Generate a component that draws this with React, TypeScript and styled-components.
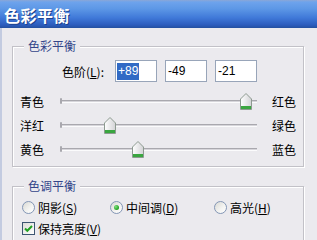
import React from 'react';
import styled, { createGlobalStyle } from 'styled-components';

const GlobalStyle = createGlobalStyle`
  html, body {
    margin: 0;
    padding: 0;
    background: #ebeaee;
  }
  body {
    font-family: "Noto Sans CJK SC", "Noto Sans", sans-serif;
    font-size: 12px;
    color: #000;
  }
`;

const Window = styled.div`
  width: 317px;
  height: 240px;
  overflow: hidden;
  background: #ebeaee;
  display: flex;
  flex-direction: column;
`;

const TitleBar = styled.div`
  height: 28px;
  flex-shrink: 0;
  box-sizing: border-box;
  padding: 2px 0 0 4px;
  display: flex;
  align-items: center;
  background: linear-gradient(
    to bottom,
    #8ba6d6 0px,
    #6ea3ec 2px,
    #5c97e6 9px,
    #3f78d8 18px,
    #2c5cbd 25px,
    #24509f 28px
  );
  color: #fff;
  font-size: 16px;
  font-weight: bold;
  letter-spacing: 0.5px;
  text-shadow: 1px 1px 0 #1d428f;
`;

const Body = styled.div`
  flex: 1;
  border-left: 2px solid #c3cbe0;
  padding: 0 13px 0 10px;
`;

const Group = styled.div<{ $top: number; $bottom: number }>`
  margin-top: ${p => p.$top}px;
  padding-bottom: ${p => p.$bottom}px;
  border: 1px solid #c2c1c7;
  box-shadow: inset 1px 1px 0 #fff, 1px 1px 0 #fff;
`;

const Legend = styled.div`
  width: fit-content;
  margin: -9px 0 0 11px;
  padding: 0 4px;
  line-height: 16px;
  background: #ebeaee;
  color: #33458a;
`;

const LevelRow = styled.div`
  display: flex;
  align-items: center;
  height: 22px;
  margin-top: 6px;
  padding-left: 49px;
`;

const LevelLabel = styled.div`
  width: 53px;
`;

const Inputs = styled.div`
  display: flex;
  gap: 8px;
`;

const ValueBox = styled.div`
  width: 42px;
  height: 22px;
  box-sizing: border-box;
  border: 1px solid #98a5b9;
  background: #fff;
  padding-left: 1px;
  display: flex;
  align-items: center;
  font-family: "Liberation Sans", Arial, sans-serif;
  font-size: 12px;
`;

const ValueText = styled.span<{ $selected?: boolean }>`
  padding: 0 1px;
  line-height: 17px;
  background: ${p => (p.$selected ? '#316ac5' : 'transparent')};
  color: ${p => (p.$selected ? '#fff' : '#000')};
`;

const Sliders = styled.div`
  margin-top: 7px;
`;

const SliderRow = styled.div`
  display: flex;
  align-items: center;
  height: 24px;
  padding-left: 7px;
`;

const SideLabel = styled.div`
  width: 40px;
`;

const RightLabel = styled.div`
  margin-left: 15px;
`;

const Track = styled.div`
  position: relative;
  width: 197px;
  height: 24px;
  display: flex;
  align-items: center;
`;

const TrackLine = styled.div`
  position: relative;
  width: 100%;
  height: 1px;
  border-top: 1px solid #a9a8ae;
  border-bottom: 1px solid #fbfbfc;
  background: #d6d5da;

  &::before {
    content: '';
    position: absolute;
    left: 0;
    top: -3px;
    width: 2px;
    height: 6px;
    border-radius: 1px;
    background: #a9a8ae;
  }
`;

const Thumb = styled.div`
  position: absolute;
  top: 4px;
  width: 12px;
  height: 17px;
  margin-left: -6px;
  display: flex;
`;

const OptionRow = styled.div`
  display: grid;
  grid-template-columns: 88px 104px auto;
  align-items: center;
  height: 16px;
  margin-top: 5px;
  padding-left: 9px;
`;

const Option = styled.div`
  display: flex;
  align-items: center;
  gap: 3px;
`;

const Radio = styled.span<{ $checked?: boolean }>`
  position: relative;
  width: 13px;
  height: 13px;
  box-sizing: border-box;
  border-radius: 50%;
  border: 1px solid #8396b5;
  background: linear-gradient(135deg, #d9d9d4 0%, #f4f4f2 60%, #fff 100%);

  &::after {
    content: '';
    display: ${p => (p.$checked ? 'block' : 'none')};
    position: absolute;
    left: 3px;
    top: 3px;
    width: 5px;
    height: 5px;
    border-radius: 50%;
    background: radial-gradient(circle at 35% 35%, #7fe07f, #21a121 70%);
  }
`;

const CheckRow = styled.div`
  display: flex;
  align-items: center;
  gap: 3px;
  height: 16px;
  margin-top: 5px;
  padding-left: 9px;
`;

const CheckBox = styled.span`
  width: 13px;
  height: 13px;
  box-sizing: border-box;
  border: 1px solid #3d5672;
  background: linear-gradient(135deg, #dcdcd7, #fff);
  display: flex;
`;

const SliderThumb: React.FC<{ id: string }> = ({ id }) => (
  <svg width="12" height="17" viewBox="0 0 12 17">
    <defs>
      <linearGradient id={id} x1="0" y1="0" x2="1" y2="0">
        <stop offset="0" stopColor="#ffffff" />
        <stop offset="1" stopColor="#d3d3d6" />
      </linearGradient>
    </defs>
    <path d="M6 0.5 L11.5 6 V16.5 H0.5 V6 Z" fill={`url(#${id})`} stroke="#8d9a90" />
    <rect x="1" y="13" width="10" height="3" fill="#3aa640" />
  </svg>
);

const sliders = [
  { left: '青色', right: '红色', value: 89 },
  { left: '洋红', right: '绿色', value: -49 },
  { left: '黄色', right: '蓝色', value: -21 },
];

const App: React.FC = () => {
  return (
    <>
      <GlobalStyle />
      <Window>
        <TitleBar>色彩平衡</TitleBar>
        <Body>
          <Group $top={18} $bottom={5}>
            <Legend>色彩平衡</Legend>
            <LevelRow>
              <LevelLabel>
                色阶(<u>L</u>):
              </LevelLabel>
              <Inputs>
                <ValueBox>
                  <ValueText $selected>+89</ValueText>
                </ValueBox>
                <ValueBox>
                  <ValueText>-49</ValueText>
                </ValueBox>
                <ValueBox>
                  <ValueText>-21</ValueText>
                </ValueBox>
              </Inputs>
            </LevelRow>
            <Sliders>
              {sliders.map((s, i) => (
                <SliderRow key={s.left}>
                  <SideLabel>{s.left}</SideLabel>
                  <Track>
                    <TrackLine />
                    <Thumb style={{ left: `${((s.value + 100) / 200) * 100}%` }}>
                      <SliderThumb id={`thumb-grad-${i}`} />
                    </Thumb>
                  </Track>
                  <RightLabel>{s.right}</RightLabel>
                </SliderRow>
              ))}
            </Sliders>
          </Group>
          <Group $top={19} $bottom={10}>
            <Legend>色调平衡</Legend>
            <OptionRow>
              <Option>
                <Radio />
                <span>
                  阴影(<u>S</u>)
                </span>
              </Option>
              <Option>
                <Radio $checked />
                <span>
                  中间调(<u>D</u>)
                </span>
              </Option>
              <Option>
                <Radio />
                <span>
                  高光(<u>H</u>)
                </span>
              </Option>
            </OptionRow>
            <CheckRow>
              <CheckBox>
                <svg width="11" height="11" viewBox="0 0 11 11">
                  <path d="M2 5.5 L4.3 7.8 L9 3" fill="none" stroke="#21a121" strokeWidth="2" />
                </svg>
              </CheckBox>
              <span>
                保持亮度(<u>V</u>)
              </span>
            </CheckRow>
          </Group>
        </Body>
      </Window>
    </>
  );
};

export default App;
